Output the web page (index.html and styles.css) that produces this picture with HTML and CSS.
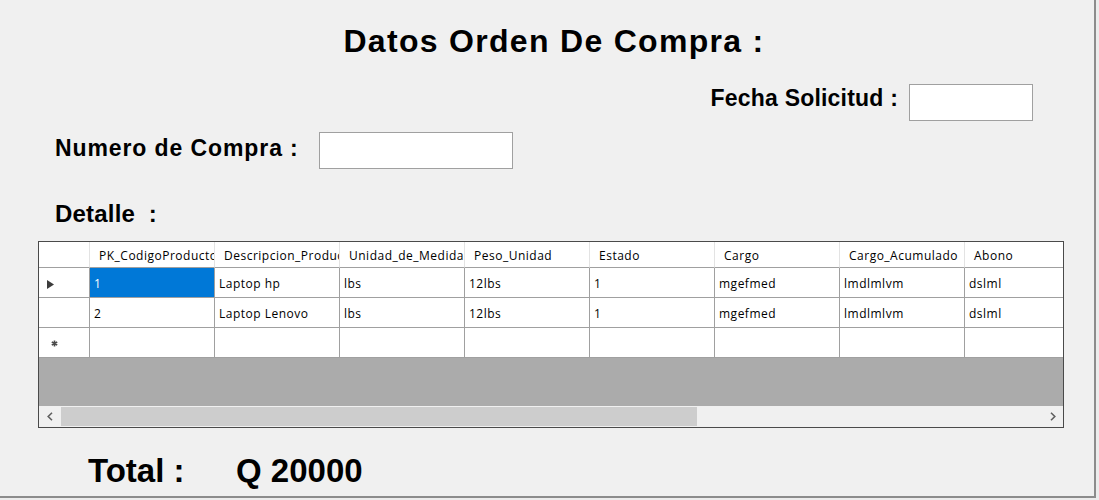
FILE: index.html
```html
<!DOCTYPE html>
<html lang="es">
<head>
<meta charset="utf-8">
<title>Datos Orden De Compra</title>
<link rel="stylesheet" href="styles.css">
</head>
<body>
<div class="window">
  <h1 class="title">Datos Orden De Compra :</h1>

  <div class="row row-fecha">
    <span class="lbl lbl-fecha">Fecha Solicitud :</span>
    <div class="textbox tb-fecha"></div>
  </div>

  <div class="row row-numero">
    <span class="lbl lbl-numero">Numero de Compra :</span>
    <div class="textbox tb-numero"></div>
  </div>

  <div class="lbl detalle">Detalle&nbsp; :</div>

  <div class="grid">
    <div class="grid-view">
      <div class="grid-table">
        <div class="hc corner"></div>
        <div class="hc">PK_CodigoProducto</div>
        <div class="hc">Descripcion_Producto</div>
        <div class="hc">Unidad_de_Medida</div>
        <div class="hc">Peso_Unidad</div>
        <div class="hc">Estado</div>
        <div class="hc">Cargo</div>
        <div class="hc">Cargo_Acumulado</div>
        <div class="hc">Abono</div>

        <div class="rh"><svg class="rh-arrow" width="7" height="9" viewBox="0 0 7 9"><path d="M0 0 L7 4.5 L0 9 Z" fill="#3c3c3c"/></svg></div>
        <div class="c sel">1</div>
        <div class="c">Laptop hp</div>
        <div class="c">lbs</div>
        <div class="c">12lbs</div>
        <div class="c">1</div>
        <div class="c">mgefmed</div>
        <div class="c">lmdlmlvm</div>
        <div class="c">dslml</div>

        <div class="rh"></div>
        <div class="c">2</div>
        <div class="c">Laptop Lenovo</div>
        <div class="c">lbs</div>
        <div class="c">12lbs</div>
        <div class="c">1</div>
        <div class="c">mgefmed</div>
        <div class="c">lmdlmlvm</div>
        <div class="c">dslml</div>

        <div class="rh"><svg class="rh-star" width="7" height="7" viewBox="0 0 7 7"><path d="M3.5 0.5 V6.5 M0.8 2 L6.2 5 M0.8 5 L6.2 2" stroke="#4a4a4a" stroke-width="1.6"/></svg></div>
        <div class="c"></div>
        <div class="c"></div>
        <div class="c"></div>
        <div class="c"></div>
        <div class="c"></div>
        <div class="c"></div>
        <div class="c"></div>
        <div class="c"></div>
      </div>
    </div>
    <div class="hscroll">
      <div class="sb-btn"><svg width="6" height="9" viewBox="0 0 6 9"><path d="M5 0.8 L1.2 4.5 L5 8.2" fill="none" stroke="#606060" stroke-width="1.6"/></svg></div>
      <div class="sb-thumb"></div>
      <div class="sb-track"></div>
      <div class="sb-btn"><svg width="6" height="9" viewBox="0 0 6 9"><path d="M1 0.8 L4.8 4.5 L1 8.2" fill="none" stroke="#606060" stroke-width="1.6"/></svg></div>
    </div>
  </div>

  <div class="total">
    <span class="total-lbl">Total :</span>
    <span class="total-val">Q 20000</span>
  </div>
</div>
</body>
</html>
```
FILE: styles.css
```css
* { box-sizing: border-box; }

html, body {
  margin: 0;
  padding: 0;
  background: #ececec;
}

.window {
  width: 1096px;
  height: 498px;
  background: #f0f0f0;
  border-right: 2px solid #8c8c8c;
  border-bottom: 2px solid #8c8c8c;
  font-family: "Liberation Sans", Arial, sans-serif;
  color: #000;
  overflow: hidden;
}

.title {
  margin: 0;
  padding-top: 25px;
  padding-left: 14px;
  font-size: 32px;
  line-height: 32px;
  font-weight: bold;
  letter-spacing: 1.3px;
  text-align: center;
}

.row {
  display: flex;
  align-items: flex-start;
}

.lbl {
  font-size: 23px;
  line-height: 23px;
  font-weight: bold;
  letter-spacing: 0.2px;
  white-space: nowrap;
}

.row-fecha {
  margin-top: 27px;
  justify-content: flex-end;
  padding-right: 61px;
}

.lbl-fecha {
  margin-top: 3px;
  margin-right: 11px;
}

.row-numero {
  margin-top: 11px;
  padding-left: 55px;
}

.lbl-numero {
  width: 264px;
  margin-top: 5px;
  letter-spacing: 0.9px;
}

.textbox {
  background: #fff;
  border: 1px solid #a0a0a0;
}

.tb-fecha {
  width: 124px;
  height: 37px;
}

.tb-numero {
  width: 194px;
  height: 37px;
}

.detalle {
  margin-top: 33px;
  margin-left: 55px;
  font-size: 24px;
}

.grid {
  margin-top: 16px;
  margin-left: 38px;
  width: 1026px;
  height: 187px;
  border: 1px solid #4a4a4a;
  display: flex;
  flex-direction: column;
  background: #ababab;
}

.grid-view {
  width: 1024px;
  height: 164px;
  overflow: hidden;
  background: #ababab;
}

.grid-table {
  display: grid;
  grid-template-columns: 51px repeat(8, 125px);
  grid-template-rows: 26px 30px 30px 30px;
  width: max-content;
  font-family: "Open Sans", "Noto Sans", sans-serif;
  font-size: 12px;
  letter-spacing: 0.5px;
}

.hc, .c, .rh {
  background: #fff;
  white-space: nowrap;
  overflow: hidden;
  display: flex;
  align-items: center;
}

.hc {
  padding-left: 9px;
  border-right: 1px solid #e3e3e3;
  border-bottom: 1px solid #a0a0a0;
  padding-top: 1px;
}

.c {
  padding-left: 4px;
  padding-top: 1px;
  border-right: 1px solid #a0a0a0;
  border-bottom: 1px solid #a0a0a0;
}

.c.sel {
  background: #0078d7;
  color: #fff;
}

.rh {
  border-right: 1px solid #a0a0a0;
  border-bottom: 1px solid #a0a0a0;
}

.rh-arrow {
  margin-left: 8px;
  margin-top: 3px;
}

.rh-star {
  margin-left: 12px;
  margin-top: 2px;
}

.hscroll {
  height: 21px;
  display: flex;
  align-items: stretch;
  background: #f0f0f0;
}

.sb-btn {
  width: 21px;
  display: flex;
  align-items: center;
  justify-content: center;
}

.sb-thumb {
  width: 636px;
  margin: 1px 0 1px 1px;
  background: #cdcdcd;
}

.sb-track {
  flex: 1;
}

.total {
  margin-top: 26px;
  margin-left: 88px;
  display: flex;
  font-size: 33px;
  line-height: 33px;
  font-weight: bold;
}

.total-lbl {
  width: 148px;
}
```
